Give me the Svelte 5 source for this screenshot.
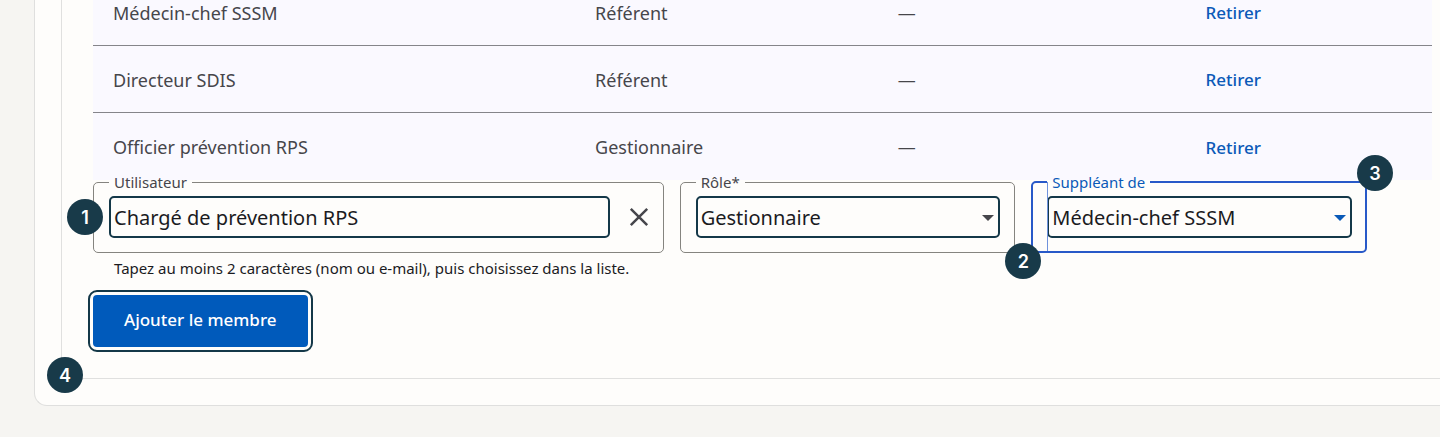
<script>
  const people = ['Médecin-chef SSSM', 'Directeur SDIS', 'Officier prévention RPS'];
  const roles = ['Gestionnaire', 'Référent'];

  let members = $state([
    { name: 'Médecin-chef SSSM', role: 'Référent', deputy: '—' },
    { name: 'Directeur SDIS', role: 'Référent', deputy: '—' },
    { name: 'Officier prévention RPS', role: 'Gestionnaire', deputy: '—' }
  ]);
  let user = $state('Chargé de prévention RPS');
  let role = $state('Gestionnaire');
  let deputy = $state('Médecin-chef SSSM');

  function remove(index) {
    members.splice(index, 1);
  }

  function add(event) {
    event.preventDefault();
    if (user.trim()) members.push({ name: user, role, deputy });
    user = '';
  }
</script>

<main class="card">
  <section class="panel">
    <table class="members">
      <colgroup>
        <col class="col-name" />
        <col class="col-role" />
        <col class="col-deputy" />
        <col />
      </colgroup>
      <tbody>
        {#each members as member, i}
          <tr>
            <td>{member.name}</td>
            <td>{member.role}</td>
            <td>{member.deputy}</td>
            <td><button class="remove" type="button" onclick={() => remove(i)}>Retirer</button></td>
          </tr>
        {/each}
      </tbody>
    </table>

    <form onsubmit={add}>
      <div class="fields">
        <div class="cell">
          <fieldset class="field">
            <legend><label for="user">Utilisateur</label></legend>
            <div class="line">
              <input id="user" class="control" type="text" bind:value={user} autocomplete="off" aria-describedby="user-hint" />
              <button class="clear" type="button" aria-label="Effacer" onclick={() => (user = '')}>
                <svg viewBox="0 0 24 24" width="24" height="24" aria-hidden="true">
                  <path d="M3.8 3.8 20.2 20.2M20.2 3.8 3.8 20.2" fill="none" stroke="currentColor" stroke-width="2.5" />
                </svg>
              </button>
            </div>
          </fieldset>
          <span class="badge badge-user">1</span>
        </div>

        <div class="cell">
          <fieldset class="field">
            <legend><label for="role">Rôle*</label></legend>
            <div class="line select">
              <select id="role" class="control" bind:value={role}>
                {#each roles as option}
                  <option>{option}</option>
                {/each}
              </select>
              <svg class="arrow" viewBox="0 0 12 6" width="12" height="6" aria-hidden="true">
                <path d="M0 0h12L6 6z" fill="currentColor" />
              </svg>
            </div>
          </fieldset>
          <span class="badge badge-role">2</span>
        </div>

        <div class="cell">
          <fieldset class="field active">
            <legend><label for="deputy">Suppléant de</label></legend>
            <div class="line select">
              <select id="deputy" class="control" bind:value={deputy}>
                {#each people as option}
                  <option>{option}</option>
                {/each}
              </select>
              <svg class="arrow" viewBox="0 0 12 6" width="12" height="6" aria-hidden="true">
                <path d="M0 0h12L6 6z" fill="currentColor" />
              </svg>
            </div>
          </fieldset>
          <span class="badge badge-deputy">3</span>
        </div>
      </div>

      <p id="user-hint" class="hint">Tapez au moins 2 caractères (nom ou e-mail), puis choisissez dans la liste.</p>
      <button class="submit" type="submit">Ajouter le membre</button>
    </form>
    <span class="badge badge-submit">4</span>
  </section>
</main>

<style>
  :global(body) {
    background: #f6f5f2;
    overflow: hidden;
  }

  .card {
    margin: -21px 0 0 34px;
    padding: 0 0 26px 26px;
    border: 1px solid #dfdfde;
    border-width: 0 0 1px 1px;
    border-radius: 0 0 0 13px;
    background: #fefdfb;
    color: #1b1b1f;
    font-family: 'Noto Sans', sans-serif;
  }

  .panel {
    position: relative;
    padding: 0 8px 31px 31px;
    border: 1px solid #e0e0df;
    border-width: 0 0 1px 1px;
  }

  .members {
    width: 100%;
    table-layout: fixed;
    border-collapse: separate;
    border-spacing: 0;
    background: #faf9ff;
    color: #46464b;
    font-size: 18px;
  }

  .col-name {
    width: 36%;
  }

  .col-role {
    width: 22.6%;
  }

  .col-deputy {
    width: 23%;
  }

  td {
    box-sizing: border-box;
    height: 67px;
    padding: 1px 20px 0;
    border-bottom: 1px solid #85858a;
  }

  tr:last-child td {
    border-bottom: 0;
  }

  button {
    margin: 0;
    border: 0;
    font-family: inherit;
    cursor: pointer;
  }

  .remove {
    display: block;
    padding: 0;
    background: none;
    color: #0a5ab8;
    font-size: 17px;
    font-weight: 500;
  }

  .fields {
    display: grid;
    grid-template-columns: 1.7fr 1fr 1fr;
    gap: 16px;
    margin-top: -6px;
    padding-right: 65px;
  }

  .cell {
    position: relative;
    min-width: 0;
  }

  .field {
    min-width: 0;
    margin: 0;
    padding: 0 14px 0 15px;
    border: 1px solid #85847f;
    border-radius: 5px;
  }

  legend {
    padding: 0 5px;
    color: #46464b;
    font-size: 15px;
    line-height: 16px;
  }

  label {
    display: block;
  }

  .line {
    display: flex;
    align-items: center;
    gap: 17px;
    padding: 6px 0 14px;
  }

  .control {
    box-sizing: border-box;
    flex: 1;
    min-width: 0;
    width: 100%;
    height: 42px;
    margin: 0;
    padding: 0 3px;
    border: 2px solid #143848;
    border-radius: 5px;
    outline: 0;
    background: transparent;
    color: #1b1b1f;
    font-family: inherit;
    font-size: 20px;
    appearance: none;
  }

  .clear {
    display: flex;
    margin-right: -2px;
    padding: 0;
    background: none;
    color: #46464b;
  }

  .select {
    position: relative;
  }

  .arrow {
    position: absolute;
    top: 25px;
    right: 6px;
    color: #46464b;
    pointer-events: none;
  }

  .active {
    padding: 0 13px 0 14px;
    border: 2px solid #2859c8;
  }

  .active legend,
  .active .arrow {
    color: #0a5ab8;
  }

  .active .line {
    padding-bottom: 13px;
  }

  .active .line::before {
    content: '';
    position: absolute;
    top: -8px;
    bottom: 0;
    left: 0;
    border-left: 1px solid #6f92dc;
  }

  .hint {
    margin: 6px 0 18px;
    padding-left: 21px;
    font-size: 15px;
    line-height: 18px;
  }

  .submit {
    display: block;
    height: 52px;
    padding: 0 31px 4px;
    border-radius: 4px;
    outline: 2px solid #143848;
    outline-offset: 3px;
    background: #005abb;
    color: #fff;
    font-size: 17px;
    font-weight: 500;
  }

  .badge {
    position: absolute;
    display: grid;
    place-items: center;
    width: 36px;
    height: 36px;
    border-radius: 50%;
    background: #183a49;
    color: #fff;
    font-family: Inter, sans-serif;
    font-size: 18px;
    font-weight: 600;
    z-index: 1;
  }

  .badge-user {
    top: 25px;
    left: -26px;
  }

  .badge-role {
    right: -26px;
    bottom: -26px;
  }

  .badge-deputy {
    top: -19px;
    right: -26px;
  }

  .badge-submit {
    bottom: -15px;
    left: -15px;
  }
</style>
